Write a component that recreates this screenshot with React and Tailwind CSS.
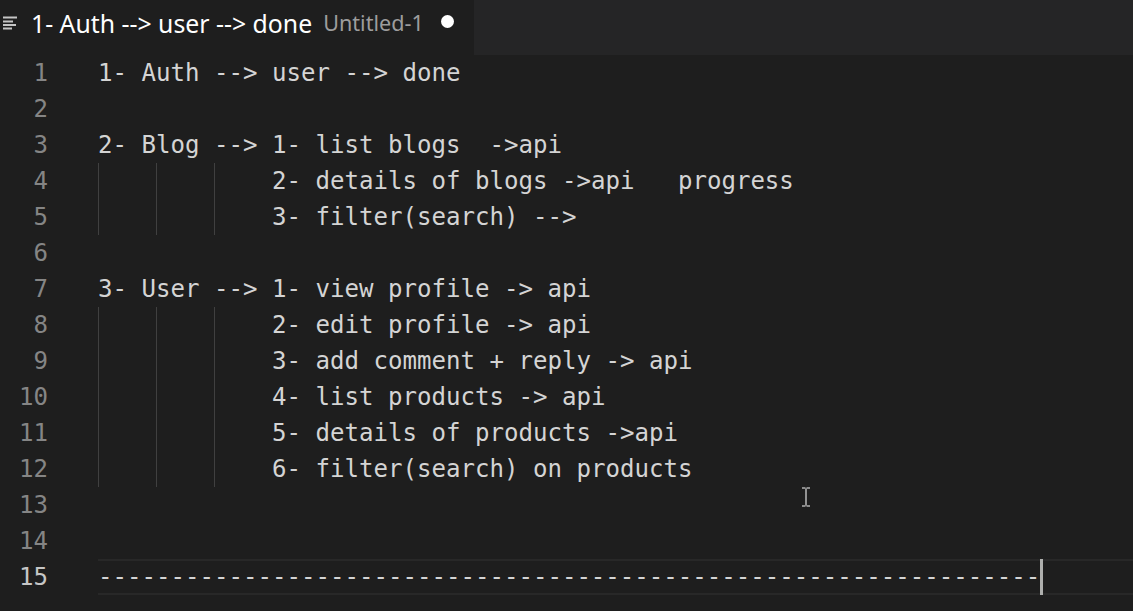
import React from "react"

const lines = [
  { indent: 0, text: "1- Auth --> user --> done" },
  { indent: 0, text: "" },
  { indent: 0, text: "2- Blog --> 1- list blogs  ->api" },
  { indent: 3, text: "2- details of blogs ->api   progress" },
  { indent: 3, text: "3- filter(search) -->" },
  { indent: 0, text: "" },
  { indent: 0, text: "3- User --> 1- view profile -> api" },
  { indent: 3, text: "2- edit profile -> api" },
  { indent: 3, text: "3- add comment + reply -> api" },
  { indent: 3, text: "4- list products -> api" },
  { indent: 3, text: "5- details of products ->api" },
  { indent: 3, text: "6- filter(search) on products" },
  { indent: 0, text: "" },
  { indent: 0, text: "" },
  { indent: 0, text: "-".repeat(65), current: true },
]

function FileIcon() {
  return (
    <svg width="15" height="14" viewBox="0 0 15 14" className="shrink-0">
      <rect x="0" y="0.5" width="14" height="2" fill="#c5c5c5" />
      <rect x="0" y="4.5" width="10" height="2" fill="#c5c5c5" />
      <rect x="0" y="8" width="13" height="2" fill="#c5c5c5" />
      <rect x="0" y="11.5" width="9" height="2" fill="#c5c5c5" />
    </svg>
  )
}

function CodeLine({ n, line }) {
  return (
    <div className="flex h-[36px] items-stretch">
      <div
        className={`w-[48px] shrink-0 text-right leading-[36px] ${
          line.current ? "text-[#c6c6c6]" : "text-[#858585]"
        }`}
      >
        {n}
      </div>
      <div
        className={`ml-[50px] flex flex-1 items-stretch whitespace-pre leading-[32px] ${
          line.current ? "border-y-2 border-[#282828]" : "py-[2px]"
        }`}
      >
        {Array.from({ length: line.indent }).map((_, i) => (
          <span key={i} className="-my-[2px] w-[58px] shrink-0 border-l border-[#404040]" />
        ))}
        <span className="text-[#d4d4d4]">{line.text}</span>
        {line.current && <span className="-my-[2px] w-[3px] bg-[#aeafad]" />}
      </div>
    </div>
  )
}

export default function App() {
  return (
    <div className="relative flex h-[611px] w-[1133px] flex-col overflow-hidden bg-[#1e1e1e]">
      <div className="flex h-[55px] shrink-0 bg-[#252526]">
        <div className="flex w-[474px] items-center bg-[#1e1e1e] pb-[9px] pl-[3px] font-['Noto_Sans',sans-serif]">
          <FileIcon />
          <span className="ml-[13px] text-[24.8px] leading-none text-white">1- Auth --&gt; user --&gt; done</span>
          <span className="ml-[11px] text-[21.6px] leading-none text-[#9d9d9d]">Untitled-1</span>
          <span className="ml-[17px] mb-[3px] h-[13px] w-[13px] rounded-full bg-white" />
        </div>
      </div>
      <div className="font-['DejaVu_Sans_Mono',monospace] text-[24.08px]">
        {lines.map((line, i) => (
          <CodeLine key={i} n={i + 1} line={line} />
        ))}
      </div>
      <svg className="absolute left-[801px] top-[487px]" width="10" height="20" viewBox="0 0 10 20">
        <path d="M1 1h3.5M5.5 1H9M5 1.5v17M1 19h3.5M5.5 19H9" stroke="#b0b0b0" strokeWidth="1.6" fill="none" />
      </svg>
    </div>
  )
}
